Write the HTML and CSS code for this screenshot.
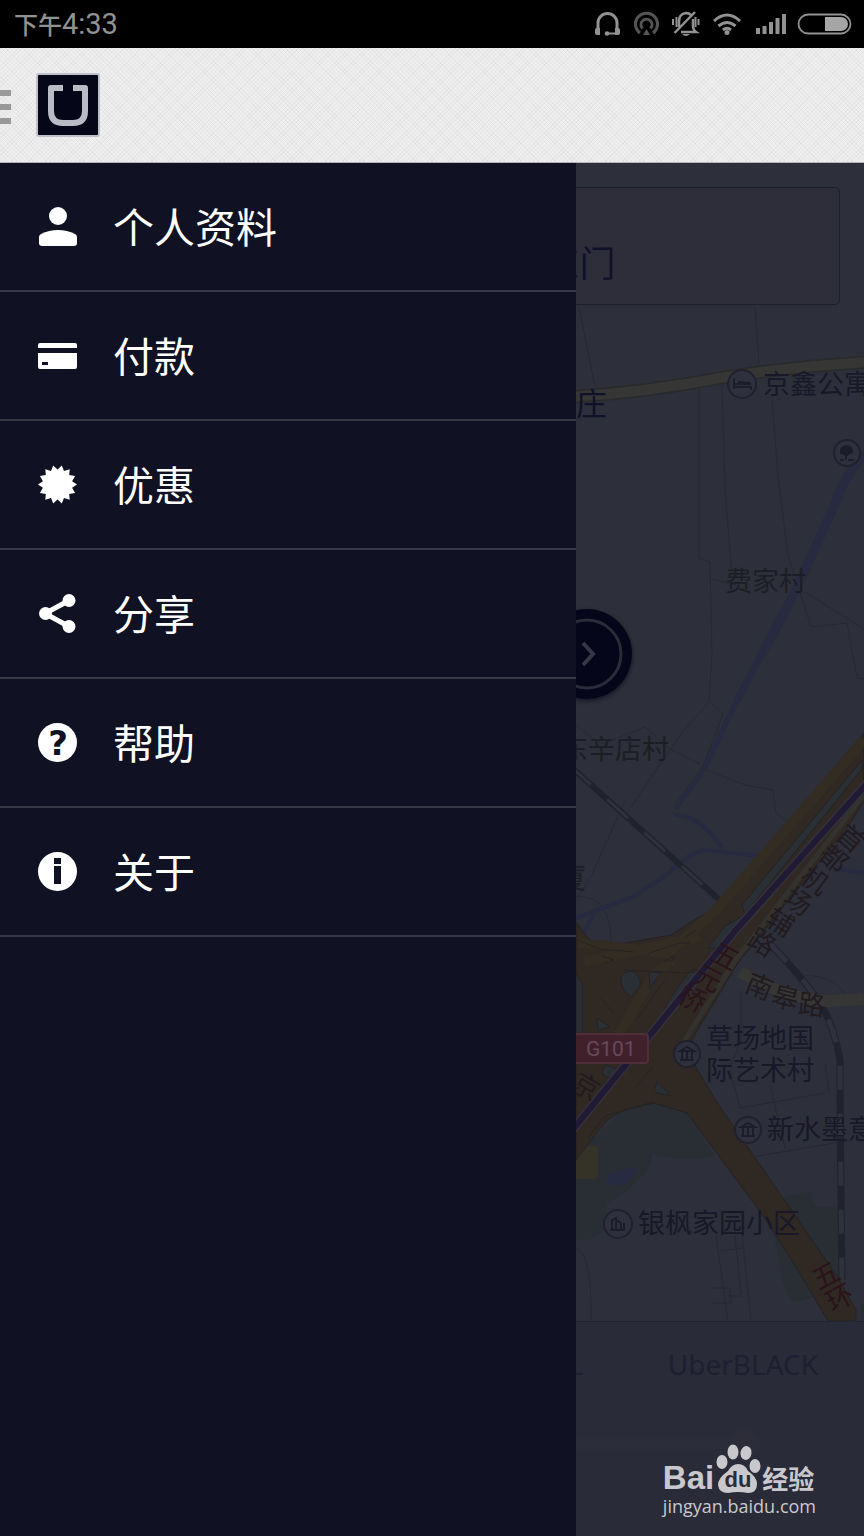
FILE: index.html
```html
<!DOCTYPE html>
<html lang="zh-CN">
<head>
  <meta charset="utf-8">
  <title>Uber</title>
  <meta name="viewport" content="width=device-width, initial-scale=1">
  <link rel="stylesheet" href="styles.css">
</head>
<body>
  <div class="status-bar">
    <div class="clock">下午<span class="digits">4:33</span></div>
    <svg class="status-icons" width="260" height="32" viewBox="592 8 260 32" fill="none" stroke="#929292" stroke-width="3">
      <!-- headset -->
      <path d="M598 30V23a9.500 9.500 0 0 1 19 0V30"/>
      <path d="M619 33.500H608" stroke-width="2"/>
      <path d="M595 30q0-2 2-2h3v7h-3q-2 0-2-2zM620 30q0-2-2-2h-3v7h3q2 0 2-2z" fill="#929292" stroke="none"/>
      <circle cx="607" cy="33.500" r="2.300" fill="#929292" stroke="none"/>
      <!-- hotspot -->
      <g stroke="#555">
        <path d="M640 33a11 11 0 1 1 13 0"/>
        <path d="M642.500 28.500a5.500 5.500 0 1 1 8 0"/>
        <path d="M646.500 29l3.500 6h-7z" fill="#555" stroke="none"/>
      </g>
      <!-- muted bell -->
      <path d="M679 27v-6q0-7 7-8 3 0 5 2M693 19v7q0 4 3 6H681M674.500 33L695 12" stroke-width="2.500"/>
      <path d="M676.500 17v10M673 19v6M695.500 17v10M698.500 19v6" stroke-width="2"/>
      <path d="M682 34h8q-4 4-8 0z" fill="#929292" stroke="none"/>
      <!-- wifi -->
      <path d="M714 21q13-12 26 0M718.500 26q8.500-7 17 0M723 30q4-3.500 8 0" stroke-width="3"/>
      <circle cx="727" cy="32.500" r="2.500" fill="#929292" stroke="none"/>
      <!-- signal -->
      <path d="M758 34v-6M764.500 34v-8M771 34v-12M777.500 34v-16M784 34v-20" stroke-width="4"/>
      <!-- battery -->
      <rect x="798.500" y="14.500" width="52" height="19" rx="9.500" stroke-width="1.800"/>
      <path d="M825 17h16a7 7 0 0 1 0 14h-16z" fill="#a6a6a6" stroke="none"/>
    </svg>
  </div>

  <header class="header">
    <button class="menu-button" aria-label="菜单"><span></span><span></span><span></span></button>
    <svg class="logo" width="64" height="64" viewBox="0 0 64 64">
      <rect x="1" y="1" width="62" height="62" rx="2" fill="#050618" stroke="#bfbfca" stroke-width="2"/>
      <path d="M27 15H15v23q0 12 12 12h10q12 0 12-12V15H37" fill="none" stroke="#b9bbc5" stroke-width="6" stroke-linejoin="round"/>
    </svg>
  </header>

  <main class="stage">
    <div class="map">
      <svg class="map-canvas" viewBox="0 163 864 1158">
        <!-- parks and water -->
        <g fill="#292d34">
          <path d="M576 1165l13-22 35-33 30-7 33 10 28 43q-31 7-63-3 0 25-45 50v20q-5 18-31 17z"/>
          <path d="M775 1198l35-6 5 15h27v73l-12 12-34 10q-12-5-17-40l-5-28z"/>
          <path d="M861 1321v-15l3-4v19z"/>
        </g>
        <path d="M607 1175l12-5 17-3v8l-14 11-15-2z" fill="#272b41"/>
        <rect x="572" y="1146" width="26" height="33" rx="3" fill="#353227"/>
        <!-- side streets -->
        <g class="street">
          <path d="M579 307l16 80M755 307l4 56M699 386v172l11 4 2 90-3 50-28 32-57 83M722 383l3 105 7 88M772 397l6 80 10 78 16 50 7 22 36-4 10 55 7 1M712 579l25 6M805 592l59 37"/>
          <path d="M576 726l26 18 43-17 25 22 30 15M711 702l12 12-20 52-28 38M707 770l38 15 28 5 3 23 14 11"/>
          <path d="M625 800l-33 75-16 25M576 896q36 0 35 47M741 990v50l-10 25M800 975q35 0 45 20M730 1070l10 38 85-15M770 1085l15 63M752 1157l100-17M825 1063l4 30"/>
          <path d="M576 1248q16 5 15 73M716 1235l12 87M735 1235l6 60M742 1235l9 86M720 1251l22-3M712 1288h18l1 15h-20M728 1296h13"/>
        </g>
        <!-- rivers -->
        <g fill="none" stroke="#272a40">
          <path d="M866 454q-18 14-32 52l-39 86-33 62" stroke-width="9"/>
          <path d="M763 652l-26 48" stroke-width="7"/>
          <path d="M739 696l-35 73" stroke-width="5"/>
          <path d="M704 769l-8 12-12 16-8 12M576 918l57-21 35-23q21-22 37-24l54 6M674 815q27 0 47 32M584 932l10-18M838 869l26 4" stroke-width="4"/>
        </g>
        <path d="M570 397q78-5 150-19 75-12 150-16" fill="none" stroke="#292a2c" stroke-width="13"/>
        <path d="M570 397q78-5 150-19 75-12 150-16" fill="none" stroke="#363635" stroke-width="10"/>
        <!-- railway -->
        <g fill="none">
          <path d="M570 766l154 138" stroke="#20222e" stroke-width="6"/>
          <path d="M570 766l154 138" stroke="#2f313d" stroke-width="3" stroke-dasharray="28 22"/>
          <path d="M770 944q25 25 45 52 18 24 25 64 0 60 2 220" stroke="#20222e" stroke-width="7"/>
          <path d="M770 944q25 25 45 52 18 24 25 64 0 60 2 220" stroke="#2f313d" stroke-width="5" stroke-dasharray="24 24"/>
        </g>
        <path d="M740 972q55 30 90 29l34-2" fill="none" stroke="#363635" stroke-width="12"/>
        <!-- expressways -->
        <path d="M864 733l-53 63-90 109-27 15-23 15-57 10q-20-1-27-8l-11-15v238l13-17 18-23 17-10 30-7 33 10 77 104 32 50 32 54h28v-11l-18-32-53-77-67-97-23-38-7-20 50-83 111-138 14-22z" fill="#302823" stroke="#242323" stroke-width="1"/>
        <path d="M864 740l-148 170-48 43-90-10M700 937l-116 25M672 960l-18 15-36 60" fill="none" stroke="#332c23" stroke-width="10"/>
        <path d="M864 795L737 958l-46 72-15 25" fill="none" stroke="#34322f" stroke-width="5"/>
        <g fill="#292f35" stroke="#242323">
          <path d="M621 976q5-6 14-4l5 8v6l-9 11q-12-9-10-21zM649 972h12l-11 17zM597 1018l13 9-12 3zM688 973l18-2-24 32-18 5zM708 948l17-22 19-11 1 6-28 27zM742 905l120-145v9L745 914zM657 1082l14 14-17-4zM605 1065l12 4-7 9-8-4z"/>
          <path d="M576 973l6 10v51h-6z"/>
        </g>
        <g fill="none" stroke="#242323" stroke-width="1">
          <path d="M602 956l12 4-9 3M647 954l33-11 10 0M664 961l11-5-3 5zM578 940l21 9 35 3M624 970l60 3 20-6M601 998l13 16M684 938l12-8M588 1138l17-22 48-14M665 980l-30 42M635 1087l18-20"/>
        </g>
        <path d="M870 780L735 931 570 1133" fill="none" stroke="#34323c" stroke-width="9"/>
        <path d="M870 780L735 931 570 1133" fill="none" stroke="#211a35" stroke-width="6"/>
        <!-- road shield -->
        <rect x="556" y="1034" width="92" height="29" rx="3" fill="#40212b" stroke="#4d2e39" stroke-width="2"/>
        <text x="586" y="1056" class="shield">G101</text>
        <!-- place names -->
        <g class="place">
          <text x="763" y="394">京鑫公寓</text>
          <text x="706" y="1048">草场地国</text>
          <text x="706" y="1080">际艺术村</text>
          <text x="767" y="1139">新水墨意</text>
          <text x="638" y="1233">银枫家园小区</text>
        </g>
        <g class="village">
          <text x="725" y="591">费家村</text>
          <text x="561" y="759">东辛店村</text>
          <text x="559" y="888">厦</text>
        </g>
        <text x="576" y="415" class="town">庄</text>
        <g class="road-name">
          <text transform="translate(852 837) rotate(40)">首</text>
          <text transform="translate(835 857) rotate(40)">都</text>
          <text transform="translate(816 879) rotate(36)">机</text>
          <text transform="translate(799 900) rotate(34)">场</text>
          <text transform="translate(781 921) rotate(32)">辅</text>
          <text transform="translate(763 941) rotate(32)">路</text>
          <text transform="translate(760 985) rotate(22)">南</text>
          <text transform="translate(786 996) rotate(14)">皋</text>
          <text transform="translate(812 1003) rotate(6)">路</text>
          <text transform="translate(587 1085) rotate(30)">京</text>
        </g>
        <g class="road-name ring">
          <text transform="translate(726 955) rotate(28)">五</text>
          <text transform="translate(709 977) rotate(28)">元</text>
          <text transform="translate(693 997) rotate(28)">桥</text>
          <text transform="translate(825 1274) rotate(-28)">五</text>
          <text transform="translate(839 1296) rotate(-28)">环</text>
        </g>
        <!-- pins -->
        <g class="pin">
          <circle cx="742" cy="384" r="14"/>
          <circle cx="847" cy="453" r="13"/>
          <circle cx="687" cy="1054" r="13"/>
          <circle cx="748" cy="1130" r="13"/>
          <circle cx="618" cy="1224" r="14"/>
        </g>
        <g fill="none" stroke="#1c1c2b" stroke-width="2">
          <path d="M734 378v11M734 387h17v3M735 384h16M738 382l12 1"/>
          <path d="M846 453v7M840 460h4M848 460h6"/>
          <path d="M841 453q-1-6 5-7 6 0 6 6l-5 3z" fill="#1c1c2b"/>
          <path d="M680 1051l7-4 7 4zM682 1051v9M687 1051v9M692 1051v9M680 1060h14M741 1127l7-4 7 4zM743 1127v9M748 1127v9M753 1127v9M741 1136h14"/>
          <path d="M612 1230v-10l4-2v12M616 1220l5 3v7M610 1230h15M624 1229v-6"/>
        </g>
      </svg>

      <div class="address">东门</div>

      <button class="confirm" aria-label="下一步">
        <svg width="90" height="90" viewBox="0 0 90 90" fill="none">
          <circle cx="45" cy="45" r="34" stroke="#2b2c3a" stroke-width="3"/>
          <path d="M41 34l10 11-10 11" stroke="#363744" stroke-width="4"/>
        </svg>
      </button>
    </div>

    <section class="products">
      <div class="product-row">
        <button class="product">L</button>
        <button class="product">UberBLACK</button>
      </div>
      <input class="product-slider" type="range" min="0" max="100" value="100" aria-label="车型">
    </section>

    <nav class="drawer">
      <ul>
        <li><a href="#profile">
          <svg class="icon" viewBox="0 0 39 39"><circle cx="20" cy="9" r="9"/><path d="M1 36v-6q0-2 2-3 8-4 17-4t17 4q2 1 2 3v6q0 3-3 3H4q-3 0-3-3z"/></svg>
          <span class="label">个人资料</span></a></li>
        <li><a href="#payment">
          <svg class="icon" viewBox="0 0 39 39"><path d="M2 7h35q2 0 2 2v3H0V9q0-2 2-2zM0 17h39v14q0 2-2 2H2q-2 0-2-2zM4 26v3h6v-3z" fill-rule="evenodd"/></svg>
          <span class="label">付款</span></a></li>
        <li><a href="#promotions">
          <svg class="icon" viewBox="0 0 39 39"><path d="M19.500 4.500L23.800.5 26 6l5.700-1.700-.5 5.800 5.900.9-3 5.200 4.900 3.300-4.900 3.300 3 5.200-5.900.9.5 5.800L26 33l-2.200 5.500-4.300-4-4.300 4L13 33l-5.700 1.700.5-5.800-5.900-.9 3-5.200L0 19.500l4.900-3.300-3-5.200 5.900-.9-.5-5.800L13 6 15.200.5z"/></svg>
          <span class="label">优惠</span></a></li>
        <li><a href="#share">
          <svg class="icon" viewBox="0 0 39 39"><path d="M31 6.500L7 19.500l24 13" fill="none" stroke="#fff" stroke-width="5"/><circle cx="31" cy="6.500" r="6.500"/><circle cx="7.500" cy="19.500" r="6.500"/><circle cx="31" cy="32.500" r="6.500"/></svg>
          <span class="label">分享</span></a></li>
        <li><a href="#help">
          <svg class="icon" viewBox="0 0 39 39"><circle cx="19.500" cy="19.500" r="19.500"/><text x="20" y="32" class="question">?</text></svg>
          <span class="label">帮助</span></a></li>
        <li><a href="#about">
          <svg class="icon" viewBox="0 0 39 39"><path d="M19.500 0a19.500 19.500 0 1 1 0 39 19.500 19.500 0 1 1 0-39zM16 6v6h7V6zM16 14v18h7V14z" fill-rule="evenodd"/></svg>
          <span class="label">关于</span></a></li>
      </ul>
    </nav>

    <div class="watermark">
      <div class="wordmark">
        <span class="bai">Bai</span>
        <svg width="48" height="50" viewBox="0 0 48 50">
          <g fill="#c9c9cd">
            <ellipse cx="8" cy="18" rx="5.500" ry="7"/>
            <ellipse cx="19" cy="8" rx="5.500" ry="7.500"/>
            <ellipse cx="32" cy="9" rx="5.500" ry="7" transform="rotate(12 32 9)"/>
            <ellipse cx="41" cy="22" rx="5.500" ry="7"/>
            <path d="M24 20q7 0 10 7 9 6 9 13 0 9-9 9-10-2-20 0-9 0-10-8 0-7 10-14 4-7 10-7z"/>
          </g>
          <text x="24" y="43" class="du">du</text>
        </svg>
        <span class="jingyan">经验</span>
      </div>
      <div class="site">jingyan.baidu.com</div>
    </div>
  </main>
</body>
</html>
```
FILE: styles.css
```css
body {
  margin: 0;
  min-height: 100vh;
  display: flex;
  flex-direction: column;
  font-family: "Noto Sans CJK SC", sans-serif;
  background: #2a2b38;
}

button {
  border: none;
  padding: 0;
  background: none;
  font: inherit;
  cursor: pointer;
}

.status-bar {
  display: flex;
  align-items: center;
  justify-content: space-between;
  height: 48px;
  padding: 0 12px 0 14px;
  background: #000;
}

.clock {
  font-size: 24px;
  font-weight: 500;
  line-height: 46px;
  color: #929292;
}

.digits {
  font-family: Roboto, sans-serif;
  font-size: 29px;
  font-weight: 400;
}

.header {
  display: flex;
  align-items: center;
  gap: 25px;
  height: 114px;
  border-bottom: 1px solid #b5b5b8;
  background:
    repeating-linear-gradient(45deg, rgba(0, 0, 0, 0.03) 0 1px, transparent 1px 3px),
    repeating-linear-gradient(-45deg, rgba(0, 0, 0, 0.03) 0 1px, transparent 1px 3px),
    #efefef;
}

.menu-button {
  display: flex;
  flex-direction: column;
  gap: 8px;
  width: 11px;
  padding-top: 4px;
}

.menu-button span {
  height: 6px;
  background: #999;
}

.stage {
  position: relative;
  flex: 1;
  display: flex;
  flex-direction: column;
}

/* map */
.map {
  position: relative;
  background: #2d2f3a;
}

.map-canvas {
  display: block;
  width: 100%;
}

.street {
  fill: none;
  stroke: #272932;
  stroke-width: 1;
}

.place,
.village {
  font-size: 27px;
  fill: #181829;
}

.village {
  fill: #1d1e25;
}

.town {
  font-size: 31px;
  fill: #10112a;
}

.road-name {
  font-size: 27px;
  fill: #211b20;
  text-anchor: middle;
  dominant-baseline: central;
}

.ring {
  fill: #2a131b;
}

.shield {
  font-family: Roboto, sans-serif;
  font-size: 21px;
  fill: #67495a;
}

.pin {
  fill: #2f303d;
  stroke: #20202f;
  stroke-width: 2;
}

.address {
  position: absolute;
  top: 24px;
  left: 24px;
  right: 24px;
  box-sizing: border-box;
  padding: 46px 0 16px 60%;
  border: 1px solid #1d1e2b;
  border-radius: 5px;
  background: #2d2e3a;
  font-size: 36px;
  line-height: 54px;
  color: #10112a;
}

.confirm {
  position: absolute;
  top: 446px;
  left: 542px;
  width: 90px;
  height: 90px;
  border-radius: 50%;
  background: #050619;
  box-shadow: 0 2px 4px rgba(5, 6, 25, 0.6);
}

/* product picker */
.products {
  flex: 1;
  border-top: 1px solid #232432;
  background: #2a2b38;
}

.product-row {
  display: flex;
  justify-content: flex-end;
  gap: 84px;
  padding: 20px 46px 0 0;
}

.product {
  font-family: "Noto Sans", sans-serif;
  font-size: 28px;
  line-height: 44px;
  color: #1e1f30;
}

.product-slider {
  display: block;
  appearance: none;
  width: 88%;
  height: 32px;
  margin: 42px 0 0;
  background: linear-gradient(#2c2d3a, #2c2d3a) center / 100% 10px no-repeat;
}

.product-slider::-webkit-slider-thumb {
  appearance: none;
  width: 32px;
  height: 32px;
  border-radius: 50%;
  background: #2c2d39;
}

/* drawer */
.drawer {
  position: absolute;
  top: 0;
  bottom: 0;
  left: 0;
  width: 66.6667%;
  background: #101122;
}

.drawer ul {
  margin: 0;
  padding: 0;
  list-style: none;
}

.drawer a {
  display: flex;
  align-items: center;
  gap: 36px;
  height: 127px;
  padding-left: 38px;
  border-bottom: 2px solid #373845;
  font-size: 41px;
  color: #fff;
  text-decoration: none;
}

.label {
  padding-bottom: 4px;
}

.icon {
  width: 39px;
  height: 39px;
  fill: #fff;
}

.question {
  font-family: "DejaVu Sans", sans-serif;
  font-size: 34px;
  font-weight: 700;
  fill: #101122;
  text-anchor: middle;
}

/* watermark */
.watermark {
  position: absolute;
  right: 48px;
  bottom: 18px;
  color: #c9c9cd;
}

.wordmark {
  display: flex;
  align-items: flex-end;
}

.bai {
  font-family: "Liberation Sans", sans-serif;
  font-size: 33px;
  font-weight: 700;
  line-height: 33px;
}

.du {
  font-family: "Liberation Sans", sans-serif;
  font-size: 22px;
  font-weight: 700;
  fill: #2b2b39;
  text-anchor: middle;
}

.jingyan {
  font-size: 26px;
  font-weight: 700;
  line-height: 32px;
}

.site {
  font-family: "Open Sans", sans-serif;
  font-size: 18px;
  line-height: 24px;
}
```
